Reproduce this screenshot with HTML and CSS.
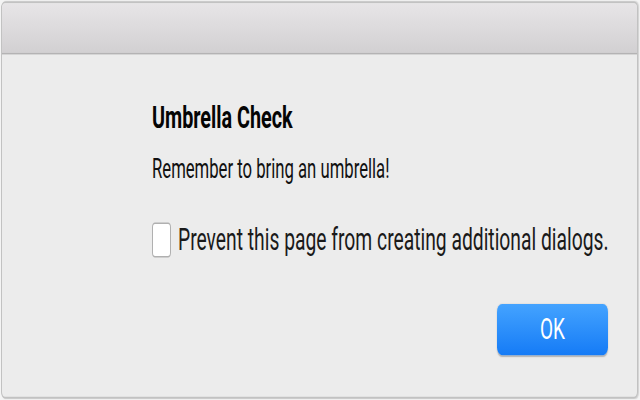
FILE: index.html
```html
<!DOCTYPE html>
<html>
<head>
    <title>Umbrella Check</title>
    <link rel="stylesheet" href="styles.css">
</head>
<body>
    <div class="screen">
        <div class="window">
            <div class="titlebar"></div>
            <div class="dialog">
                <div class="dialog-title">Umbrella Check</div>
                <div class="dialog-message">Remember to bring an umbrella!</div>
                <label class="dialog-check">
                    <input type="checkbox" id="prevent">
                    <span class="box"></span>
                    <span>Prevent this page from creating additional dialogs.</span>
                </label>
                <div class="buttons">
                    <button class="btn">OK</button>
                </div>
            </div>
        </div>
    </div>
</body>
</html>
```

FILE: styles.css
```css
html, body {
    margin: 0;
    height: 100%;
    overflow: hidden;
    background: #f4f4f4;
}

body {
    font-family: Roboto, "Liberation Sans", sans-serif;
    color: #111;
}

/* the reference is stretched vertically, so lay it out flat and stretch */
.screen {
    width: 640px;
    height: 250px;
    padding-top: 1px;
    box-sizing: border-box;
    transform: scaleY(1.6);
    transform-origin: top left;
}

.window {
    margin: 0 2px 0 1px;
    height: 248px;
    border: 1px solid #c2c2c2;
    border-radius: 4px;
    background: #ececec;
    box-shadow: 1px 0 1px rgba(0, 0, 0, 0.15);
    overflow: hidden;
    box-sizing: border-box;
}

.titlebar {
    height: 31px;
    background: linear-gradient(#e7e5e7, #d2d0d2);
    border-bottom: 1px solid #b4b3b4;
}

.dialog {
    padding: 29px 29px 0 150px;
}

.dialog-title {
    font-size: 19.8px;
    font-weight: bold;
    line-height: 22px;
    color: #050505;
}

.dialog-message {
    margin-top: 11px;
    font-size: 16.7px;
    line-height: 20px;
}

.dialog-check {
    display: flex;
    align-items: center;
    margin-top: 23px;
    font-size: 19.3px;
    line-height: 22px;
    color: #1a1a1a;
    white-space: nowrap;
}

.dialog-check input {
    display: none;
}

.dialog-check .box {
    width: 17px;
    height: 20px;
    margin-right: 7px;
    border: 1px solid #b0b0b0;
    border-radius: 3px;
    background: #fff;
    flex: none;
}

.buttons {
    display: flex;
    justify-content: flex-end;
    margin-top: 29px;
}

.btn {
    width: 111px;
    height: 32px;
    padding: 0;
    border: none;
    border-radius: 5px;
    background: linear-gradient(#44a3ff, #157bf6);
    box-shadow: 0 0.5px 1px rgba(0, 0, 0, 0.25);
    color: #fff;
    font-family: Roboto, "Liberation Sans", sans-serif;
    font-size: 19px;
    line-height: 32px;
    cursor: pointer;
}
```
